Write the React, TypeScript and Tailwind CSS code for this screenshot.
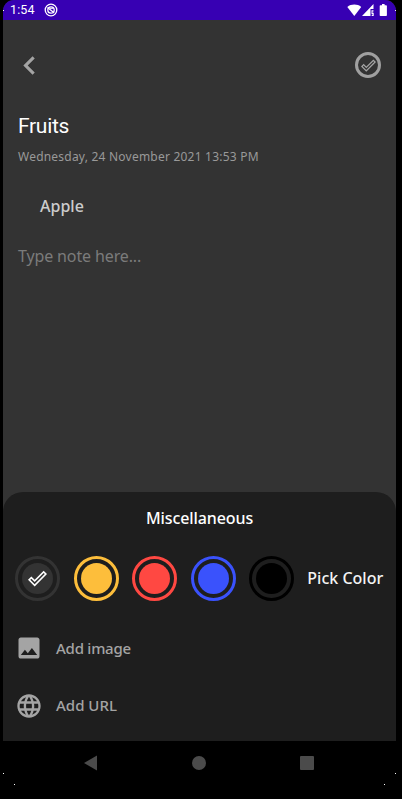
import { MdChevronLeft, MdDoneOutline, MdImage, MdLanguage } from "react-icons/md";

const swatches = [
  { ring: "border-[#333333]", fill: "bg-[#333333]", selected: true },
  { ring: "border-[#fdbe3b]", fill: "bg-[#fdbe3b]", selected: false },
  { ring: "border-[#ff4842]", fill: "bg-[#ff4842]", selected: false },
  { ring: "border-[#3a52fc]", fill: "bg-[#3a52fc]", selected: false },
  { ring: "border-black", fill: "bg-black", selected: false },
];

function StatusBar() {
  return (
    <div className="flex h-5 items-center bg-[#3700b3] pl-[7px] pr-[7px] text-white">
      <span className="font-[Roboto] text-[12.5px] leading-5 tracking-[0.1px]">1:54</span>
      <svg className="ml-[9.5px]" width="14" height="14" viewBox="0 0 14 14" fill="none" stroke="currentColor">
        <circle cx="7" cy="7" r="5.8" strokeWidth="1.3" />
        <circle cx="7" cy="7" r="3.2" strokeWidth="1.3" />
        <path d="M3.5 4.6 10 9.8" strokeWidth="1.3" />
        <path d="M6 5.3h3.2" strokeWidth="1" />
      </svg>
      <svg className="ml-auto" width="42" height="13" viewBox="0 0 42 13" fill="currentColor">
        <path d="M.3 3C4.2-.2 10.4-.2 14.2 3L7.3 12Z" />
        <path d="M26.5 0v5h-3v7H15Z" />
        <path d="M24.5 6.2h2v1.2h-1v1.4h1.2V12h-2v-1.2h.9v-.9h-1.1Z" />
        <path d="M35 0h2.6v1.2h1.5c.5 0 .8.3.8.8v9.2c0 .5-.3.8-.8.8h-5.6c-.5 0-.8-.3-.8-.8V2c0-.5.3-.8.8-.8H35Z" />
      </svg>
    </div>
  );
}

function ColorPicker() {
  return (
    <div className="mt-[26px] flex h-[45px] items-center gap-[13.4px] pl-[12.4px]">
      {swatches.map((s, i) => (
        <div key={i} className={`flex size-[45px] shrink-0 items-center justify-center rounded-full border-[3px] ${s.ring}`}>
          <div className={`flex size-[31px] shrink-0 items-center justify-center rounded-full ${s.fill}`}>
            {s.selected && <MdDoneOutline className="size-[19px] text-white" />}
          </div>
        </div>
      ))}
      <span className="-mt-px whitespace-nowrap text-[16px] font-medium leading-6 text-[#f4f4f4]">Pick Color</span>
    </div>
  );
}

export default function App() {
  return (
    <div className="h-[799px] w-[402px] overflow-hidden bg-black pl-[3px] font-['Noto_Sans',sans-serif]">
      <div className="relative flex h-[785px] w-[393px] flex-col">
        <div className="flex h-[741px] flex-col overflow-hidden rounded-t-[11px] bg-[#333333]">
          <StatusBar />
          <div className="flex h-[90px] items-center justify-between pl-[8px] pr-[15px]">
            <MdChevronLeft className="size-[37px] text-[#a4a4a4]" />
            <div className="flex size-[26px] items-center justify-center rounded-full border-[3px] border-[#a0a0a0]">
              <MdDoneOutline className="size-[15px] text-[#a4a4a4]" />
            </div>
          </div>
          <div className="flex flex-1 flex-col items-start whitespace-nowrap pl-[15px]">
            <h1 className="mt-px font-[Roboto] text-[21px] leading-[30px] tracking-[-0.3px] text-white">Fruits</h1>
            <p className="mt-[6px] text-[12px] leading-5 tracking-[0.22px] text-[#999999]">Wednesday, 24 November 2021 13:53 PM</p>
            <p className="ml-[22px] mt-[27px] text-[16px] font-medium leading-6 text-[#cccccc]">Apple</p>
            <p className="mt-[26px] text-[16px] leading-6 tracking-[-0.13px] text-[#7b7b7b]">Type note here...</p>
          </div>
          <section className="flex h-[249px] flex-col rounded-t-[20px] bg-[#1e1e1e]">
            <h2 className="mt-[14px] text-center text-[16px] font-medium leading-6 tracking-[-0.1px] text-white">Miscellaneous</h2>
            <ColorPicker />
            <div className="mt-[33px] flex h-7 items-center gap-[13px] pl-[12px] text-[#a4a4a4]">
              <MdImage className="size-[28px]" />
              <span className="text-[15px] font-medium tracking-[-0.25px]">Add image</span>
            </div>
            <div className="mt-[30px] flex h-7 items-center gap-[13px] pl-[12px] text-[#a4a4a4]">
              <MdLanguage className="size-[28px]" />
              <span className="-mt-px text-[15px] font-medium">Add URL</span>
            </div>
          </section>
        </div>
        <nav className="flex h-11 items-center bg-black pl-[81px] text-[#4b4b4b]">
          <svg width="13" height="16" viewBox="0 0 13 16" fill="currentColor"><path d="M0 8 13 .5v15Z" /></svg>
          <div className="ml-[95px] size-[14px] rounded-full bg-[#4b4b4b]" />
          <div className="ml-[93.5px] size-[14px] rounded-[1px] bg-[#4b4b4b]" />
        </nav>
        <i className="absolute left-0 top-[773px] size-px bg-white" />
        <i className="absolute left-[11px] top-[784px] size-px bg-white" />
        <i className="absolute left-[392px] top-[773px] size-px bg-white" />
        <i className="absolute left-[381px] top-[784px] size-px bg-white" />
        <i className="absolute left-0 top-[10px] size-px bg-white" />
        <i className="absolute left-[392px] top-[10px] size-px bg-white" />
      </div>
    </div>
  );
}
